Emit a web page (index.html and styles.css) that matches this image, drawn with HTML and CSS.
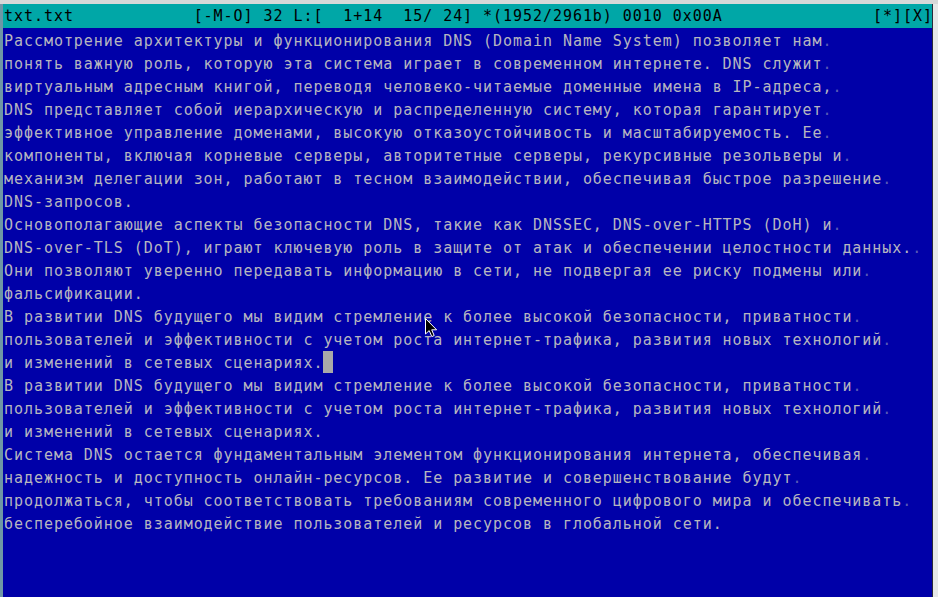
FILE: index.html
```html
<!DOCTYPE html>
<html lang="ru">
<head>
<meta charset="utf-8">
<title>txt.txt - mcedit</title>
<link rel="stylesheet" href="styles.css">
</head>
<body>
<div class="screen">
  <div class="top-strip"></div>
  <div class="window">
    <div class="left-edge"></div>
    <div class="term">
      <div class="status">
        <span class="status-left">txt.txt            [-M-O] 32 L:[  1+14  15/ 24] *(1952/2961b) 0010 0x00A</span>
        <span class="status-right">[*][X]</span>
      </div>
      <div class="editor">
        <div class="line">Рассмотрение архитектуры и функционирования DNS (Domain Name System) позволяет нам<span class="ws">.</span></div>
        <div class="line">понять важную роль, которую эта система играет в современном интернете. DNS служит<span class="ws">.</span></div>
        <div class="line">виртуальным адресным книгой, переводя человеко-читаемые доменные имена в IP-адреса,<span class="ws">.</span></div>
        <div class="line">DNS представляет собой иерархическую и распределенную систему, которая гарантирует<span class="ws">.</span></div>
        <div class="line">эффективное управление доменами, высокую отказоустойчивость и масштабируемость. Ее<span class="ws">.</span></div>
        <div class="line">компоненты, включая корневые серверы, авторитетные серверы, рекурсивные резольверы и<span class="ws">.</span></div>
        <div class="line">механизм делегации зон, работают в тесном взаимодействии, обеспечивая быстрое разрешение<span class="ws">.</span></div>
        <div class="line">DNS-запросов.</div>
        <div class="line">Основополагающие аспекты безопасности DNS, такие как DNSSEC, DNS-over-HTTPS (DoH) и<span class="ws">.</span></div>
        <div class="line">DNS-over-TLS (DoT), играют ключевую роль в защите от атак и обеспечении целостности данных.<span class="ws">.</span></div>
        <div class="line">Они позволяют уверенно передавать информацию в сети, не подвергая ее риску подмены или<span class="ws">.</span></div>
        <div class="line">фальсификации.</div>
        <div class="line">В развитии DNS будущего мы видим стремление к более высокой безопасности, приватности<span class="ws">.</span></div>
        <div class="line">пользователей и эффективности с учетом роста интернет-трафика, развития новых технологий<span class="ws">.</span></div>
        <div class="line">и изменений в сетевых сценариях.<span class="cursor"> </span></div>
        <div class="line">В развитии DNS будущего мы видим стремление к более высокой безопасности, приватности<span class="ws">.</span></div>
        <div class="line">пользователей и эффективности с учетом роста интернет-трафика, развития новых технологий<span class="ws">.</span></div>
        <div class="line">и изменений в сетевых сценариях.</div>
        <div class="line">Система DNS остается фундаментальным элементом функционирования интернета, обеспечивая<span class="ws">.</span></div>
        <div class="line">надежность и доступность онлайн-ресурсов. Ее развитие и совершенствование будут<span class="ws">.</span></div>
        <div class="line">продолжаться, чтобы соответствовать требованиям современного цифрового мира и обеспечивать<span class="ws">.</span></div>
        <div class="line">бесперебойное взаимодействие пользователей и ресурсов в глобальной сети.</div>
      </div>
    </div>
    <div class="right-edge"></div>
  </div>
  <svg class="pointer" width="13" height="20" viewBox="0 0 13 20" aria-hidden="true">
    <path d="M0.5 0.5 L0.5 16 L4.2 12.6 L6.8 18.6 L9.2 17.5 L6.7 11.8 L11.6 11.8 Z" fill="#000" stroke="#fff" stroke-width="1" stroke-linejoin="round"/>
  </svg>
</div>
</body>
</html>
```

FILE: styles.css
```css
html, body {
  margin: 0;
  padding: 0;
  background: #0000a8;
}

.screen {
  position: relative;
  width: 938px;
  height: 597px;
  overflow: hidden;
  display: flex;
  flex-direction: column;
  background: #0000a8;
}

.top-strip {
  height: 4px;
  background: #d6d8d8;
  flex: none;
}

.window {
  flex: 1;
  display: flex;
}

.left-edge {
  width: 3px;
  background: #6f97a6;
  flex: none;
}

.right-edge {
  width: 5px;
  background: #e6e8e8;
  border-left: 1px solid #2a2a3a;
  flex: none;
}

.term {
  flex: 1;
  display: flex;
  flex-direction: column;
  background: #0000a8;
  font-family: "DejaVu Sans Mono", "Liberation Mono", monospace;
  font-size: 15px;
  letter-spacing: 0.95px;
}

.status {
  height: 24px;
  background: #00a7a7;
  color: #000;
  display: flex;
  justify-content: space-between;
  align-items: center;
  padding-left: 1px;
  white-space: pre;
}

.status-right {
  margin-right: -1px;
}

.editor {
  padding-left: 1px;
  color: #b6b6c0;
}

.line {
  box-sizing: border-box;
  height: 23px;
  padding-top: 2px;
  line-height: 23px;
  white-space: pre;
}

.ws {
  color: #5a5ab4;
}

.cursor {
  display: inline-block;
  width: 9.95px;
  height: 22px;
  margin-top: -1px;
  vertical-align: top;
  background: #a9a9a9;
}

.pointer {
  position: absolute;
  left: 425px;
  top: 318px;
}
```
